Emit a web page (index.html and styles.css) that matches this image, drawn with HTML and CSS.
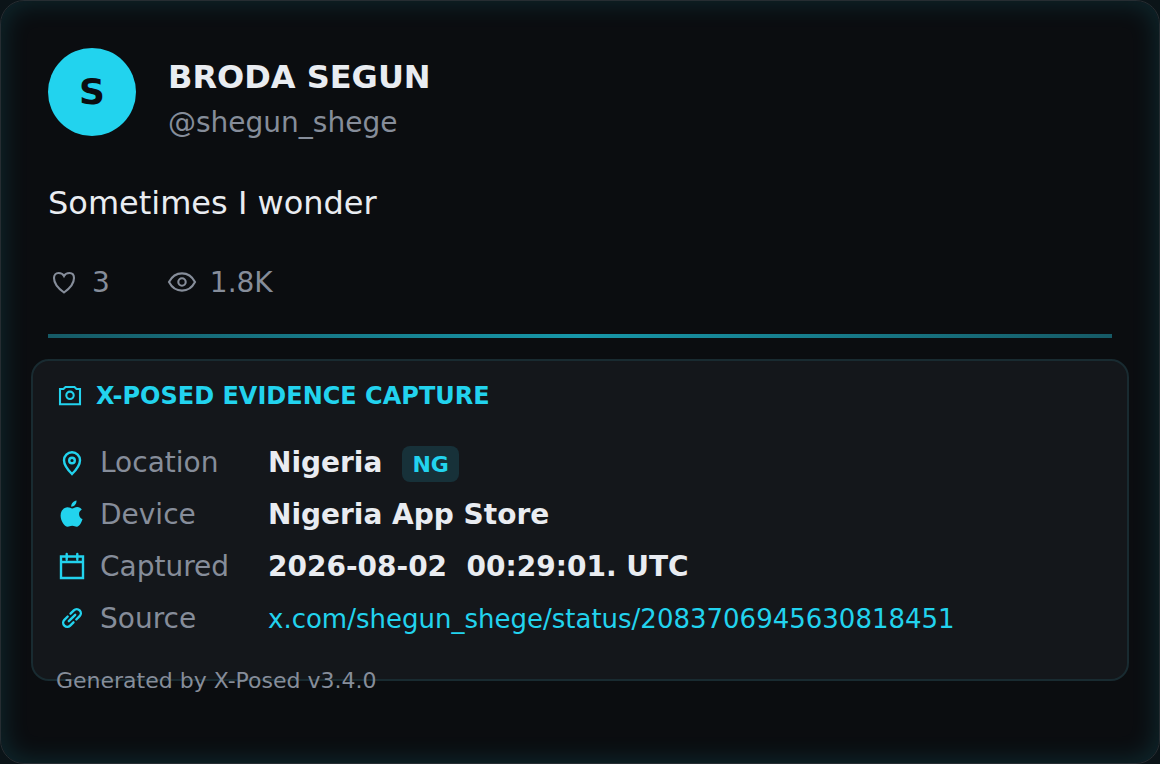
FILE: index.html
```html
<!DOCTYPE html>
<html lang="en">
<head>
  <meta charset="UTF-8">
  <title>X-Posed Evidence Capture</title>
  <link rel="stylesheet" href="styles.css">
</head>
<body>

<div class="card">
  <div class="card-header">
    <div class="avatar">S</div>
    <div class="user">
      <div class="user-name">BRODA SEGUN</div>
      <div class="user-handle">@shegun_shege</div>
    </div>
  </div>

  <div class="post-text">Sometimes I wonder</div>

  <div class="stats">
    <div class="stat stat-likes">
      <svg class="icon" viewBox="0 0 32 32"><path d="M16 26.500C11 23 6 18 6 12C6 9 7.800 7 10.500 7C13 7 15 8 16 10C17 8 19 7 21.500 7C24.200 7 26 9 26 12C26 18 21 23 16 26.500Z"/></svg>
      <span>3</span>
    </div>
    <div class="stat stat-views">
      <svg class="icon" viewBox="0 0 32 32"><path d="M3 16C9 4.500 23 4.500 29 16C23 27.500 9 27.500 3 16Z"/><circle cx="16" cy="16" r="3.700"/></svg>
      <span>1.8K</span>
    </div>
  </div>

  <div class="divider"></div>

  <div class="evidence">
    <div class="evidence-title">
      <svg class="icon" viewBox="0 0 28 28"><path d="M4 7H7.500L9.500 5H18.500L20.500 7H24V22.200H4Z"/><circle cx="14" cy="13.300" r="3.700"/></svg>
      <span>X-POSED EVIDENCE CAPTURE</span>
    </div>

    <div class="row">
      <svg class="icon" viewBox="0 0 32 32"><path d="M16 28C11.500 23.500 8 19.500 8 14.200A8 8 0 0 1 24 14.200C24 19.500 20.500 23.500 16 28Z"/><circle cx="16" cy="14.500" r="2.800"/></svg>
      <span class="label">Location</span>
      <span class="value">Nigeria</span>
      <span class="country">NG</span>
    </div>
    <div class="row">
      <svg class="icon icon-solid" viewBox="0 0 32 32"><path d="M20.500 2.500C20.800 5.800 18.300 8.600 15.200 8.700C15 5.600 17.600 2.900 20.500 2.500ZM25.800 11.500C23.900 12.700 23 14.200 23.100 16.200C23.200 18.600 24.500 20.300 26.500 21.100C25.600 24.100 23.700 28.700 20.800 28.700C19.100 28.700 18.200 27.700 16.200 27.700C14.200 27.700 13.200 28.700 11.700 28.700C8.300 28.700 4.600 22.700 4.600 17.500C4.600 12.400 8.100 9.300 11.600 9.300C13.600 9.300 15 10.500 16.200 10.500C17.500 10.500 19 9.100 21.300 9.100C23.200 9.100 24.800 10 25.800 11.500Z"/></svg>
      <span class="label">Device</span>
      <span class="value">Nigeria App Store</span>
    </div>
    <div class="row">
      <svg class="icon" viewBox="0 0 32 32"><path d="M5 6.500H27V28H5ZM5 12H27M10.700 4V9.500M21.300 4V9.500"/></svg>
      <span class="label">Captured</span>
      <span class="value">2026-08-02&nbsp; 00:29:01. UTC</span>
    </div>
    <div class="row">
      <svg class="icon" viewBox="0 0 32 32"><path transform="rotate(-45 16 16)" d="M14 11.900H9.300a4.100 4.100 0 0 0 0 8.200H14M18 11.900H22.700a4.100 4.100 0 0 1 0 8.200H18M11.500 16H20.500"/></svg>
      <span class="label">Source</span>
      <span class="source">x.com/shegun_shege/status/2083706945630818451</span>
    </div>
  </div>

  <div class="footer">Generated by X-Posed v3.4.0</div>
</div>

</body>
</html>
```

FILE: styles.css
```css
* {
  box-sizing: border-box;
}

body {
  margin: 0;
  background: #0b1418;
  font-family: 'DejaVu Sans', Verdana, sans-serif;
}

.card {
  width: 1160px;
  height: 764px;
  padding: 47px;
  border: 1px solid #262d32;
  border-radius: 24px;
  background: #0b0d10;
  box-shadow: inset 0 0 28px rgba(34, 211, 238, 0.16);
  color: #e9ecf1;
  overflow: hidden;
}

.card-header {
  display: flex;
  gap: 32px;
  height: 88px;
}

.avatar {
  width: 88px;
  height: 88px;
  border-radius: 50%;
  background: #22d3ee;
  color: #0b0d10;
  font-size: 36px;
  font-weight: bold;
  line-height: 88px;
  text-align: center;
}

.user {
  padding-top: 7px;
}

.user-name {
  font-size: 32px;
  font-weight: bold;
  line-height: 44px;
}

.user-handle {
  color: #868d9a;
  font-size: 28px;
  line-height: 48px;
}

.post-text {
  margin-top: 44px;
  font-size: 32px;
  line-height: 46px;
}

.icon {
  flex: none;
  width: 32px;
  height: 32px;
  fill: none;
  stroke: currentColor;
  stroke-width: 2.100;
  stroke-linecap: round;
}

.icon-solid {
  fill: currentColor;
  stroke: none;
}

.stats {
  display: flex;
  gap: 56px;
  height: 40px;
  margin-top: 36px;
  color: #868d9a;
  font-size: 28px;
  line-height: 40px;
}

.stat {
  display: flex;
  align-items: center;
  gap: 12px;
}

.stat span {
  padding-top: 2px;
}

.divider {
  height: 4px;
  margin-top: 32px;
  background: linear-gradient(90deg, #165a66, #1797a9 50%, #165a66);
}

.evidence {
  height: 322px;
  margin: 21px -17px 0;
  padding: 17px 23px 0;
  border: 2px solid #192b31;
  border-radius: 18px;
  background: #14171b;
}

.evidence-title {
  display: flex;
  align-items: center;
  gap: 12px;
  height: 36px;
  margin-bottom: 22px;
  color: #22d3ee;
  font-size: 24px;
  font-weight: bold;
}

.evidence-title .icon {
  width: 28px;
  height: 28px;
}

.row {
  display: flex;
  align-items: center;
  height: 52px;
  font-size: 28px;
}

.row .icon {
  color: #22d3ee;
  stroke-width: 2.400;
}

.label {
  width: 168px;
  margin-left: 12px;
  color: #868d9a;
}

.value {
  font-weight: bold;
}

.country {
  height: 36px;
  margin: 4px 0 0 20px;
  padding: 1px 10px 0;
  border-radius: 8px;
  background: #173139;
  color: #22d3ee;
  font-size: 22px;
  font-weight: bold;
  line-height: 36px;
}

.source {
  padding-top: 2px;
  color: #22d3ee;
  font-size: 26px;
}

.footer {
  margin: -15px 0 0 8px;
  color: #868d9a;
  font-size: 22px;
  line-height: 30px;
}
```
